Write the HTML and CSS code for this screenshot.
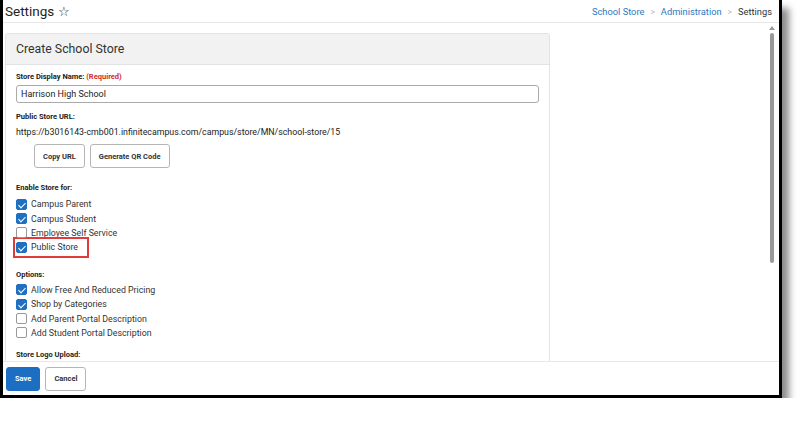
FILE: index.html
```html
<!DOCTYPE html>
<html lang="en">
<head>
    <meta charset="UTF-8" />
    <title>Settings</title>
    <link rel="stylesheet" href="styles.css">
</head>
<body>
    <div class="frame">
        <!-- header -->
        <div class="topbar">
            <div class="title">Settings <span class="star">&#9734;</span></div>
            <div class="crumbs">
                <a>School Store</a><span class="sep">&gt;</span><a>Administration</a><span class="sep">&gt;</span><span class="cur">Settings</span>
            </div>
        </div>

        <!-- main -->
        <div class="main">
            <div class="content">
                <div class="card">
                    <div class="card-head">Create School Store</div>
                    <div class="card-body">
                        <div class="label">Store Display Name: <span class="req">(Required)</span></div>
                        <div class="input">Harrison High School</div>

                        <div class="label">Public Store URL:</div>
                        <div class="url">https://b3016143-cmb001.infinitecampus.com/campus/store/MN/school-store/15</div>
                        <div class="btn-row">
                            <button class="btn">Copy URL</button>
                            <button class="btn">Generate QR Code</button>
                        </div>

                        <div class="label">Enable Store for:</div>
                        <div class="checks">
                            <div class="check"><span class="box on"></span>Campus Parent</div>
                            <div class="check"><span class="box on"></span>Campus Student</div>
                            <div class="check"><span class="box"></span>Employee Self Service</div>
                            <div class="check mark"><span class="box on"></span>Public Store</div>
                        </div>

                        <div class="label">Options:</div>
                        <div class="checks last">
                            <div class="check"><span class="box on"></span>Allow Free And Reduced Pricing</div>
                            <div class="check"><span class="box on"></span>Shop by Categories</div>
                            <div class="check"><span class="box"></span>Add Parent Portal Description</div>
                            <div class="check"><span class="box"></span>Add Student Portal Description</div>
                        </div>

                        <div class="label">Store Logo Upload:</div>
                    </div>
                </div>
            </div>
            <div class="scroll">
                <div class="arrow"></div>
                <div class="thumb"></div>
            </div>
        </div>

        <!-- footer -->
        <div class="footer">
            <button class="btn primary">Save</button>
            <button class="btn">Cancel</button>
        </div>
    </div>
</body>
</html>
```

FILE: styles.css
```css
body{
    margin:0;background:#fff;
    font-family:Roboto,"Liberation Sans",Arial,sans-serif;color:#333;
}
.frame{
    width:776px;height:395px;
    border:3px solid #000;border-top:none;
    background:#fff;
    display:flex;flex-direction:column;
    box-shadow:7px 8px 7px rgba(0,0,0,.45);
}

/* header */
.topbar{
    height:22px;flex:none;
    display:flex;justify-content:space-between;align-items:center;
    padding:0 7px 0 2px;
    border-bottom:1px solid #e8e8e8;
}
.title{font-size:13.5px;color:#222;}
.star{font-size:13px;}
.crumbs{font-size:9.3px;}
.crumbs a{color:#2b79c2;}
.crumbs .sep{color:#bbb;margin:0 6px;font-size:8.5px;}
.crumbs .cur{color:#333;}

/* main */
.main{flex:1;display:flex;overflow:hidden;background:#fff;}
.content{flex:1;padding:10px 0 0 2px;}
.card{
    width:545px;height:100%;box-sizing:border-box;
    border:1px solid #e3e3e3;border-bottom:none;
    border-radius:3px 3px 0 0;
}
.card-head{
    height:30px;background:#f2f2f2;
    border-bottom:1px solid #e3e3e3;
    font-size:12.3px;color:#333;
    display:flex;align-items:center;padding-left:10px;
}
.card-body{padding:7px 10px 0 10px;}
.label{font-size:7.5px;font-weight:bold;color:#222;line-height:10px;}
.req{color:#d12b2b;}
.input{
    margin:3px 0 9px 0;height:18px;box-sizing:border-box;
    border:1px solid #aaa;border-radius:3px;
    font-size:9px;padding:0 4px;line-height:16px;color:#222;
}
.url{font-size:8.8px;margin-top:4px;color:#222;line-height:12px;}
.btn-row{margin:6px 0 15px 18px;display:flex;gap:5px;}
.btn{
    font-family:inherit;font-size:7.5px;font-weight:bold;color:#333;
    background:#fff;border:1px solid #b5b5b5;border-radius:3px;
    height:24px;padding:0 8px;
}
.checks{margin:4px 0 15px 0;}
.checks.last{margin:3px 0 10px 0;}
.check{
    display:flex;align-items:center;font-size:8.8px;color:#333;
    height:14.4px;width:fit-content;
}
.box{
    width:11px;height:11px;box-sizing:border-box;flex:none;
    border:1px solid #999;border-radius:2px;margin-right:4px;
    display:inline-block;position:relative;
}
.box.on{background:#1f70c1;border-color:#1f70c1;}
.box.on::after{
    content:"";position:absolute;left:3px;top:1px;
    width:3px;height:6px;border:solid #fff;border-width:0 1.5px 1.5px 0;
    transform:rotate(45deg);
}
.check.mark{outline:2px solid #e03a3a;outline-offset:1px;padding-right:8px;}

/* scrollbar */
.scroll{width:10px;flex:none;margin-right:2px;padding-top:3px;}
.arrow{
    width:0;height:0;margin:0 auto 3px auto;
    border-left:3px solid transparent;border-right:3px solid transparent;
    border-bottom:4px solid #999;
}
.thumb{width:4px;height:230px;background:#999;border-radius:2px;margin:0 auto;}

/* footer */
.footer{
    height:33px;flex:none;border-top:1px solid #e8e8e8;
    display:flex;align-items:center;gap:5px;padding-left:3px;
}
.footer .btn{height:24px;}
.btn.primary{background:#1b6ec2;border-color:#1b6ec2;color:#fff;}
```
